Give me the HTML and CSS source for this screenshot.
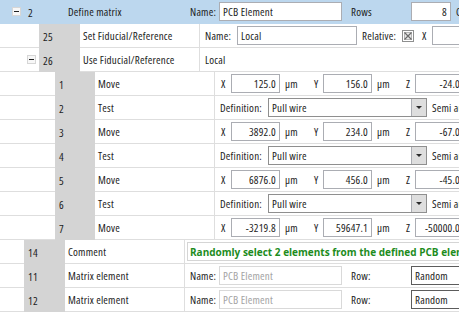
FILE: index.html
```html
<!DOCTYPE html>
<html>
  <head>
    <title>Sequence Editor</title>
    <link rel="stylesheet" href="styles.css">
  </head>
  <body>
    <div class="tree">
      <!-- Define matrix (selected) -->
      <div class="row lvl1 sel">
        <span class="indent"><span class="exp"></span></span>
        <span class="num">2</span>
        <span class="name">Define matrix</span>
        <div class="edit">
          <span class="lbl l-name1">Name:</span>
          <span class="tb w-name1">PCB Element</span>
          <span class="lbl l-rows">Rows</span>
          <span class="tb num-r w-rows">8</span>
          <span class="lbl l-cols">Columns</span>
        </div>
      </div>

      <div class="row lvl2">
        <span class="indent"></span>
        <span class="num">25</span>
        <span class="name">Set Fiducial/Reference</span>
        <div class="edit">
          <span class="lbl l-name2">Name:</span>
          <span class="tb w-name2">Local</span>
          <span class="lbl l-rel">Relative:</span>
          <svg class="chk" width="12" height="12" viewBox="0 0 12 12">
            <rect x="0.5" y="0.5" width="11" height="11" fill="#fff" stroke="#8e8f8f"/>
            <rect x="2.5" y="2.5" width="7" height="7" fill="#e9e9e9" stroke="#b5b5b5"/>
            <path d="M2.5 2.5 L9.5 9.5 M9.5 2.5 L2.5 9.5" stroke="#6b6b6b" stroke-width="1.2"/>
          </svg>
          <span class="lbl l-axis">X</span>
          <span class="tb num-r w-coord">25.0</span>
        </div>
      </div>

      <div class="row lvl2">
        <span class="indent"><span class="exp"></span></span>
        <span class="num">26</span>
        <span class="name">Use Fiducial/Reference</span>
        <div class="edit">
          <span class="lbl l-plain">Local</span>
        </div>
      </div>

      <div class="row lvl3">
        <span class="indent"></span>
        <span class="num">1</span>
        <span class="name">Move</span>
        <div class="edit">
          <span class="lbl l-x">X</span>
          <span class="tb num-r w-coord">125.0</span>
          <span class="lbl l-unit">µm</span>
          <span class="lbl l-y">Y</span>
          <span class="tb num-r w-coord">156.0</span>
          <span class="lbl l-unit">µm</span>
          <span class="lbl l-y">Z</span>
          <span class="tb num-r w-coord">-24.0</span>
        </div>
      </div>

      <div class="row lvl3">
        <span class="indent"></span>
        <span class="num">2</span>
        <span class="name">Test</span>
        <div class="edit">
          <span class="lbl l-def">Definition:</span>
          <span class="cb"><span class="cb-text">Pull wire</span><span class="cb-btn"></span></span>
          <span class="lbl l-semi">Semi automatic</span>
        </div>
      </div>

      <div class="row lvl3">
        <span class="indent"></span>
        <span class="num">3</span>
        <span class="name">Move</span>
        <div class="edit">
          <span class="lbl l-x">X</span>
          <span class="tb num-r w-coord">3892.0</span>
          <span class="lbl l-unit">µm</span>
          <span class="lbl l-y">Y</span>
          <span class="tb num-r w-coord">234.0</span>
          <span class="lbl l-unit">µm</span>
          <span class="lbl l-y">Z</span>
          <span class="tb num-r w-coord">-67.0</span>
        </div>
      </div>

      <div class="row lvl3">
        <span class="indent"></span>
        <span class="num">4</span>
        <span class="name">Test</span>
        <div class="edit">
          <span class="lbl l-def">Definition:</span>
          <span class="cb"><span class="cb-text">Pull wire</span><span class="cb-btn"></span></span>
          <span class="lbl l-semi">Semi automatic</span>
        </div>
      </div>

      <div class="row lvl3">
        <span class="indent"></span>
        <span class="num">5</span>
        <span class="name">Move</span>
        <div class="edit">
          <span class="lbl l-x">X</span>
          <span class="tb num-r w-coord">6876.0</span>
          <span class="lbl l-unit">µm</span>
          <span class="lbl l-y">Y</span>
          <span class="tb num-r w-coord">456.0</span>
          <span class="lbl l-unit">µm</span>
          <span class="lbl l-y">Z</span>
          <span class="tb num-r w-coord">-45.0</span>
        </div>
      </div>

      <div class="row lvl3">
        <span class="indent"></span>
        <span class="num">6</span>
        <span class="name">Test</span>
        <div class="edit">
          <span class="lbl l-def">Definition:</span>
          <span class="cb"><span class="cb-text">Pull wire</span><span class="cb-btn"></span></span>
          <span class="lbl l-semi">Semi automatic</span>
        </div>
      </div>

      <div class="row lvl3">
        <span class="indent"></span>
        <span class="num">7</span>
        <span class="name">Move</span>
        <div class="edit">
          <span class="lbl l-x">X</span>
          <span class="tb num-r w-coord">-3219.8</span>
          <span class="lbl l-unit">µm</span>
          <span class="lbl l-y">Y</span>
          <span class="tb num-r w-coord">59647.1</span>
          <span class="lbl l-unit">µm</span>
          <span class="lbl l-y">Z</span>
          <span class="tb num-r w-coord">-50000.0</span>
        </div>
      </div>

      <div class="row lvl1">
        <span class="indent"></span>
        <span class="num">14</span>
        <span class="name">Comment</span>
        <div class="edit">
          <span class="comment">Randomly select 2 elements from the defined PCB elements</span>
        </div>
      </div>

      <div class="row lvl1">
        <span class="indent"></span>
        <span class="num">11</span>
        <span class="name">Matrix element</span>
        <div class="edit">
          <span class="lbl l-name1">Name:</span>
          <span class="tb off w-name1">PCB Element</span>
          <span class="lbl l-rows">Row:</span>
          <span class="tb dark w-rand">Random</span>
        </div>
      </div>

      <div class="row lvl1">
        <span class="indent"></span>
        <span class="num">12</span>
        <span class="name">Matrix element</span>
        <div class="edit">
          <span class="lbl l-name1">Name:</span>
          <span class="tb off w-name1">PCB Element</span>
          <span class="lbl l-rows">Row:</span>
          <span class="tb dark w-rand">Random</span>
        </div>
      </div>
    </div>
  </body>
</html>
```

FILE: styles.css
```css
* {
  box-sizing: border-box;
}

body {
  margin: 0;
  background: #ffffff;
  font-family: "Open Sans", "Noto Sans", sans-serif;
  font-size: 11px;
  font-stretch: condensed;
  letter-spacing: 0.2px;
  color: #1b1b1b;
  overflow: hidden;
}

.tree {
  width: 459px;
  height: 312px;
  overflow: hidden;
}

/* one line of the tree */
.row {
  display: flex;
  height: 24px;
  white-space: nowrap;
}

.row > .indent,
.row > .name,
.row > .edit {
  border-bottom: 1px solid #dedede;
}

.indent {
  flex: none;
  display: flex;
  align-items: center;
  justify-content: flex-end;
}

.lvl1 .indent { width: 24px; }
.lvl2 .indent { width: 39px; }
.lvl3 .indent { width: 55px; }

/* expander box with minus */
.exp {
  position: relative;
  width: 9px;
  height: 9px;
  margin-right: 3px;
  border: 1px solid #d6d6d6;
  background: #f7f7f7;
}

.exp::after {
  content: "";
  position: absolute;
  left: 1px;
  top: 3px;
  width: 5px;
  height: 1px;
  background: #222;
}

.num {
  flex: none;
  width: 41px;
  padding-left: 4px;
  background: #d4d4d4;
  display: flex;
  align-items: center;
}

.lvl3 .num { width: 40px; }

.name {
  flex: none;
  width: 120px;
  padding-left: 3px;
  border-right: 1px solid #dedede;
  display: flex;
  align-items: center;
}

.edit {
  flex: 1;
  display: flex;
  align-items: center;
  overflow: hidden;
}

/* selected row */
.sel {
  background: #bcd7ee;
}

.sel .num {
  background: #bcd7ee;
}

.sel > .indent,
.sel > .name,
.sel > .edit {
  border-color: #bcd7ee;
}

/* labels inside the editor column */
.lbl {
  flex: none;
}

.l-name1 { width: 34px; padding-left: 5px; }
.l-name2 { width: 37px; padding-left: 5px; }
.l-rows { width: 69px; padding-left: 9px; }
.l-cols { padding-left: 5px; }
.l-rel { width: 45px; padding-left: 5px; }
.l-axis { width: 18px; padding-left: 8px; }
.l-plain { padding-left: 5px; }
.l-x { width: 16px; padding-left: 6px; }
.l-unit { width: 26px; padding-left: 5px; }
.l-y { width: 17px; padding-left: 8px; }
.l-def { width: 53px; padding-left: 5px; }
.l-semi { padding-left: 5px; }

/* text boxes */
.tb {
  flex: none;
  height: 19px;
  padding: 0 3px;
  border: 1px solid #abadb3;
  background: #ffffff;
  display: flex;
  align-items: center;
  overflow: hidden;
}

.num-r {
  justify-content: flex-end;
}

.tb.off {
  color: #a3a3a3;
  border-color: #d9d9d9;
}

.tb.dark {
  border-color: #5c5c5c;
}

.w-name1 { width: 123px; }
.w-name2 { width: 120px; }
.w-rows { width: 40px; }
.w-coord { width: 49px; }
.w-rand { width: 70px; }

.chk {
  flex: none;
}

/* combo box */
.cb {
  flex: none;
  width: 159px;
  height: 19px;
  border: 1px solid #8f8f8f;
  background: #ffffff;
  display: flex;
}

.cb-text {
  flex: 1;
  padding-left: 3px;
  display: flex;
  align-items: center;
}

.cb-btn {
  width: 15px;
  border-left: 1px solid #abadb3;
  background: #dedede;
  display: flex;
  align-items: center;
  justify-content: center;
}

.cb-btn::after {
  content: "";
  border-left: 3px solid transparent;
  border-right: 3px solid transparent;
  border-top: 3px solid #2b2b2b;
}

/* comment line */
.comment {
  flex: none;
  height: 19px;
  margin-left: 2px;
  padding-left: 2px;
  padding-right: 4px;
  border: 1px solid #d5d5d5;
  color: #1d8c1d;
  font-size: 10px;
  font-weight: bold;
  font-stretch: normal;
  letter-spacing: 0;
  display: flex;
  align-items: center;
}
```
